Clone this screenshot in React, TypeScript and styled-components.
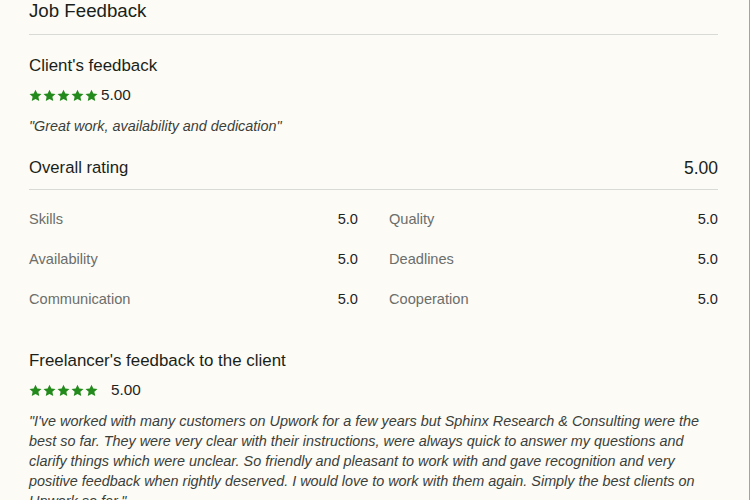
import React from "react";
import styled, { createGlobalStyle } from "styled-components";

const Global = createGlobalStyle`
  html, body { margin: 0; padding: 0; background: #fdfbf6; }
  body { font-family: "Liberation Sans", Arial, sans-serif; color: #1f241f; }
`;

const Panel = styled.div`
  box-sizing: border-box;
  width: 750px;
  height: 500px;
  overflow: hidden;
  background: #fdfbf6;
  border-right: 1px solid #a3a3a0;
  padding: 0 31px 0 29px;
`;

const Title = styled.h2`
  margin: 0;
  font-size: 18.7px;
  font-weight: 400;
  line-height: 22px;
  color: #1a1f1a;
`;

const Divider = styled.hr<{ $top: number }>`
  border: 0;
  height: 1px;
  background: #d9d9d6;
  margin: ${(p) => p.$top}px 0 0;
`;

const Heading = styled.h3<{ $top: number }>`
  margin: ${(p) => p.$top}px 0 0;
  font-size: 16.9px;
  font-weight: 400;
  line-height: 22px;
  color: #1a1f1a;
`;

const StarsRow = styled.div<{ $gap: number }>`
  display: flex;
  align-items: center;
  gap: ${(p) => p.$gap}px;
  margin-top: 8px;
  height: 20px;
`;

const Stars = styled.div`
  display: flex;
  gap: 1px;
`;

const Score = styled.span`
  font-size: 15.3px;
  color: #1f241f;
`;

const Quote = styled.p<{ $top: number }>`
  margin: ${(p) => p.$top}px 0 0;
  font-size: 14.4px;
  line-height: 20px;
  font-style: italic;
  color: #3b3f3b;
`;

const OverallRow = styled.div`
  display: flex;
  justify-content: space-between;
  align-items: center;
  margin-top: 20px;
  font-size: 16.7px;
  line-height: 24px;
  color: #1a1f1a;
`;

const OverallValue = styled.span`
  font-size: 17.5px;
`;

const Grid = styled.div`
  display: grid;
  grid-template-columns: 1fr 1fr;
  column-gap: 31px;
  row-gap: 20px;
  margin-top: 19px;
`;

const Metric = styled.div`
  display: flex;
  justify-content: space-between;
  font-size: 14.6px;
  line-height: 20px;
`;

const Label = styled.span`
  color: #6b6e6b;
`;

const Value = styled.span`
  color: #1f241f;
`;

const Star = () => (
  <svg width="13" height="13" viewBox="0 0 24 24">
    <path
      fill="#238a1c"
      d="M12 1.2l3.3 7.1 7.8.9-5.8 5.3 1.6 7.7L12 18.3l-6.9 3.9 1.6-7.7L.9 9.2l7.8-.9z"
    />
  </svg>
);

const FiveStars = () => (
  <Stars>
    {[0, 1, 2, 3, 4].map((i) => (
      <Star key={i} />
    ))}
  </Stars>
);

const metrics: [string, string][] = [
  ["Skills", "5.0"],
  ["Quality", "5.0"],
  ["Availability", "5.0"],
  ["Deadlines", "5.0"],
  ["Communication", "5.0"],
  ["Cooperation", "5.0"],
];

export default function App() {
  return (
    <>
      <Global />
      <Panel>
        <Title>Job Feedback</Title>
        <Divider $top={12} />
        <Heading $top={20}>Client's feedback</Heading>
        <StarsRow $gap={3}>
          <FiveStars />
          <Score>5.00</Score>
        </StarsRow>
        <Quote $top={11}>"Great work, availability and dedication"</Quote>
        <OverallRow>
          <span>Overall rating</span>
          <OverallValue>5.00</OverallValue>
        </OverallRow>
        <Divider $top={9} />
        <Grid>
          {metrics.map(([l, v]) => (
            <Metric key={l}>
              <Label>{l}</Label>
              <Value>{v}</Value>
            </Metric>
          ))}
        </Grid>
        <Heading $top={41}>Freelancer's feedback to the client</Heading>
        <StarsRow $gap={13}>
          <FiveStars />
          <Score>5.00</Score>
        </StarsRow>
        <Quote $top={11}>
          "I've worked with many customers on Upwork for a few years but Sphinx Research &amp; Consulting were the
          best so far. They were very clear with their instructions, were always quick to answer my questions and
          clarify things which were unclear. So friendly and pleasant to work with and gave recognition and very
          positive feedback when rightly deserved. I would love to work with them again. Simply the best clients on
          Upwork so far."
        </Quote>
      </Panel>
    </>
  );
}
